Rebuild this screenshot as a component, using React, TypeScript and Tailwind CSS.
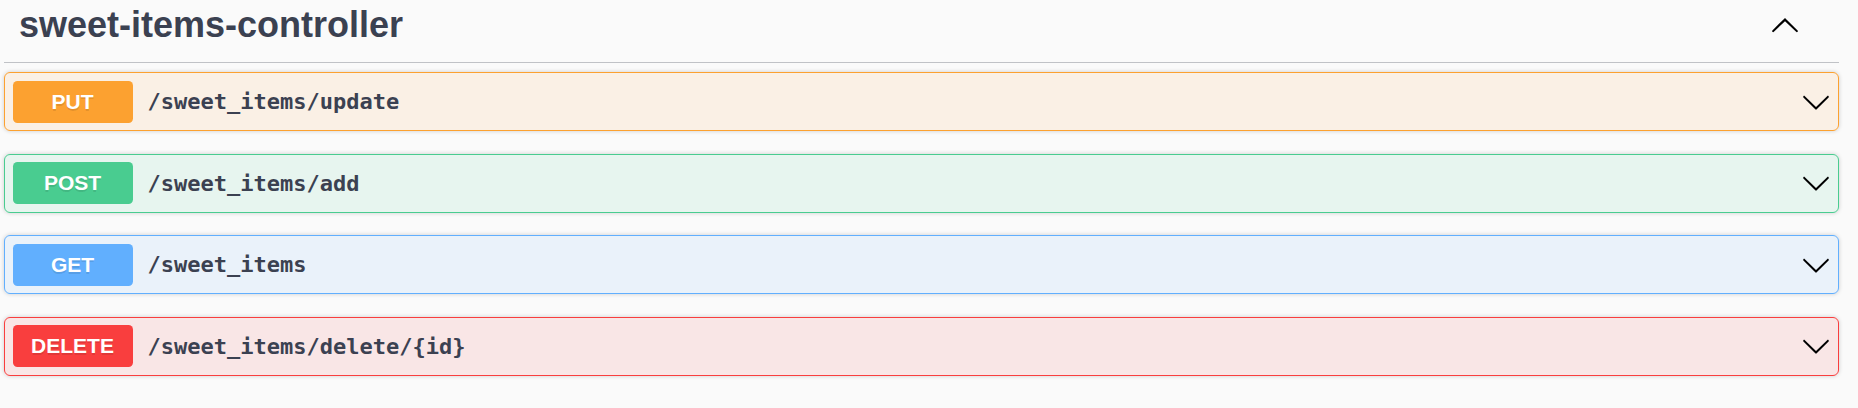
import React from "react";

type Op = {
  method: string;
  path: string;
  badge: string;
  border: string;
  bg: string;
};

const ops: Op[] = [
  {
    method: "PUT",
    path: "/sweet_items/update",
    badge: "bg-[#fca130]",
    border: "border-[#fca130]",
    bg: "bg-[rgba(252,161,48,0.1)]",
  },
  {
    method: "POST",
    path: "/sweet_items/add",
    badge: "bg-[#49cc90]",
    border: "border-[#49cc90]",
    bg: "bg-[rgba(73,204,144,0.1)]",
  },
  {
    method: "GET",
    path: "/sweet_items",
    badge: "bg-[#61affe]",
    border: "border-[#61affe]",
    bg: "bg-[rgba(97,175,254,0.1)]",
  },
  {
    method: "DELETE",
    path: "/sweet_items/delete/{id}",
    badge: "bg-[#f93e3e]",
    border: "border-[#f93e3e]",
    bg: "bg-[rgba(249,62,62,0.1)]",
  },
];

function Arrow({ up = false }: { up?: boolean }) {
  return (
    <svg
      width="30"
      height="30"
      viewBox="0 0 20 20"
      className={up ? "rotate-180 shrink-0" : "shrink-0"}
      fill="#000"
    >
      <path d="M17.418 6.109c.272-.268.709-.268.979 0s.271.701 0 .969l-7.908 7.83c-.27.268-.707.268-.979 0l-7.908-7.83c-.27-.268-.27-.701 0-.969.271-.268.709-.268.979 0L10 13.25l7.418-7.141z" />
    </svg>
  );
}

function OpBlock({ op }: { op: Op }) {
  return (
    <div
      className={`mb-[22.5px] rounded-[6px] border ${op.border} ${op.bg} shadow-[0_0_4.5px_rgba(0,0,0,0.19)]`}
    >
      <div className="flex items-center p-[7.5px]">
        <span
          className={`${op.badge} min-w-[120px] rounded-[4.5px] py-[9px] text-center text-[21px] font-bold leading-[normal] text-white [text-shadow:0_1.5px_0_rgba(0,0,0,0.1)]`}
          style={{ fontFamily: '"Liberation Sans", Arial, sans-serif' }}
        >
          {op.method}
        </span>
        <span
          className="flex-1 px-[15px] text-[22px] font-bold leading-[normal] text-[#3b4151]"
          style={{ fontFamily: '"DejaVu Sans Mono", monospace' }}
        >
          {op.path}
        </span>
        <Arrow />
      </div>
    </div>
  );
}

export default function App() {
  return (
    <div className="min-h-[408px] bg-[#fafafa] pl-[4px] pr-[19px]">
      {/* Tag header */}
      <div className="flex h-[63px] items-start justify-between border-b border-[rgba(59,65,81,0.3)]">
        <h3
          className="pl-[15px] pt-[4px] text-[36px] font-bold leading-[normal] text-[#3b4151]"
          style={{ fontFamily: '"Liberation Sans", Arial, sans-serif' }}
        >
          sweet-items-controller
        </h3>
        <div className="mr-[39px] mt-[11px]">
          <Arrow up />
        </div>
      </div>

      {/* Operations */}
      <div className="mt-[9px]">
        {ops.map((op) => (
          <OpBlock key={op.method} op={op} />
        ))}
      </div>
    </div>
  );
}
